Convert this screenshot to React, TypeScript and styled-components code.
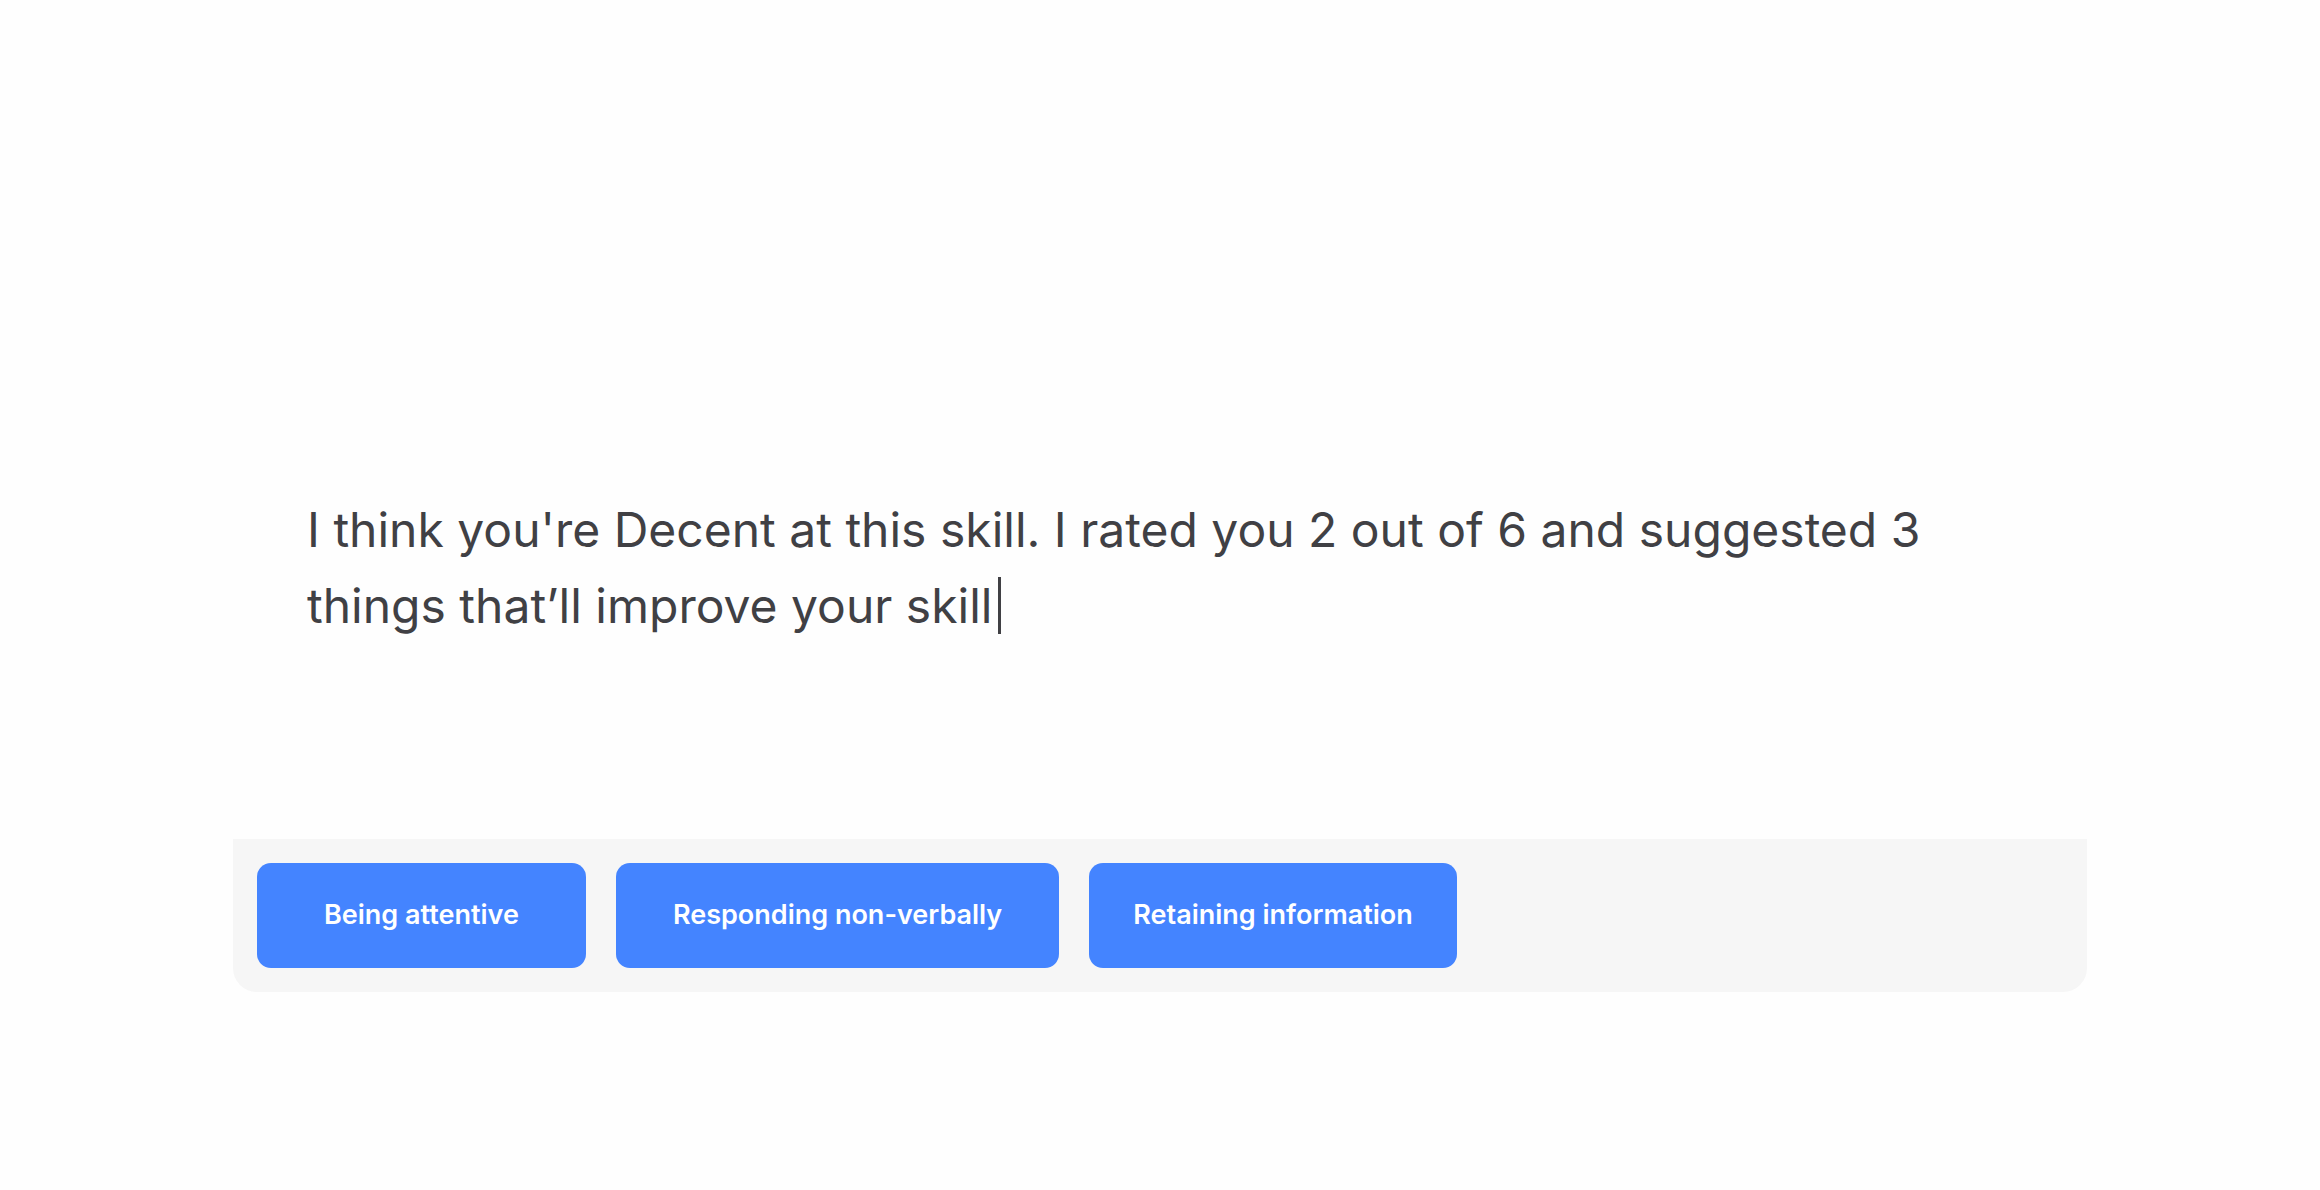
import React from "react";
import styled, { createGlobalStyle } from "styled-components";

const GlobalStyle = createGlobalStyle`
  * { box-sizing: border-box; }
  body { margin: 0; background: #fefefe; font-family: Inter, "Liberation Sans", sans-serif; }
`;

const Page = styled.main`
  min-height: 100vh;
  padding: 198px 233px;
  display: flex;
  flex-direction: column;
  justify-content: flex-end;
`;

const Card = styled.section`
  border-radius: 24px;
  overflow: hidden;
`;

const Message = styled.p`
  margin: 0;
  padding: 0 74px 195px;
  color: #404044;
  font-size: 48px;
  line-height: 76px;
`;

const Caret = styled.span`
  display: inline-block;
  width: 3px;
  height: 57px;
  margin-left: 6px;
  vertical-align: -11px;
  background: currentColor;
`;

const Suggestions = styled.div`
  display: flex;
  flex-wrap: wrap;
  gap: 30px;
  padding: 24px;
  background: #f6f6f6;
`;

const SkillButton = styled.button<{ $inset: number }>`
  height: 105px;
  padding: 0 ${({ $inset }) => $inset}px 2px;
  border: 0;
  border-radius: 14px;
  background: #4484ff;
  color: #fff;
  font: 600 27px/32px Inter, "Liberation Sans", sans-serif;
  cursor: pointer;
`;

const skills = [
  { label: "Being attentive", inset: 67 },
  { label: "Responding non-verbally", inset: 57 },
  { label: "Retaining information", inset: 44 },
];

export default function App() {
  return (
    <Page>
      <GlobalStyle />
      <Card>
        <Message>
          I think you're Decent at this skill. I rated you 2 out of 6 and suggested 3 things that’ll improve your skill<Caret aria-hidden="true" />
        </Message>
        <Suggestions>
          {skills.map(({ label, inset }) => (
            <SkillButton key={label} type="button" $inset={inset}>{label}</SkillButton>
          ))}
        </Suggestions>
      </Card>
    </Page>
  );
}
